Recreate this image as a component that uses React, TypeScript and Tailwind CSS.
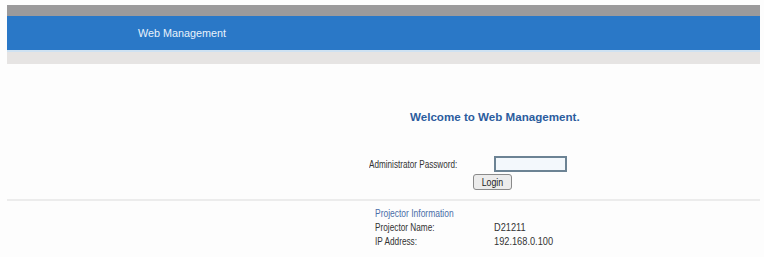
export default function App() {
  return (
    <div className="h-[257px] w-[764px] overflow-hidden bg-[#fdfdfd] pl-[7px] pr-[4px] pt-[5px] font-['Liberation_Sans',Arial,sans-serif]">
      {/* Header bars */}
      <div className="h-[11px] bg-[#9b9a9b]" />
      <div className="flex h-[34px] items-center bg-[#2a78c7] pl-[131px] text-[10.8px] text-[#e8f2fc]">
        Web Management
      </div>
      <div className="h-[2px] bg-[#cfe2f2]" />
      <div className="h-[12px] bg-[#e6e4e3]" />

      {/* Login form */}
      <div className="flex flex-col">
        <div className="pl-[403px] pt-[46px] text-[11.6px] font-bold leading-[14px] text-[#2b5c9e]">
          Welcome to Web Management.
        </div>
        <div className="mt-[32px] flex h-[16px] items-center pl-[362px]">
          <span className="w-[125px]">
            <span className="block origin-left scale-x-[0.74] whitespace-nowrap text-[11px] text-[#333]">
              Administrator Password:
            </span>
          </span>
          <input
            type="password"
            className="h-[16px] w-[73px] border-2 border-[#6c8394] bg-[#f3f8fc] outline-none"
          />
        </div>
        <div className="mt-[2px] flex pl-[466px]">
          <button className="flex h-[16px] w-[39px] items-center justify-center rounded-[3px] border border-[#8a8a8a] bg-[#ececec] text-[11px] leading-[12px] text-[#222]">
            <span className="scale-x-[0.8]">Login</span>
          </button>
        </div>
        <div className="mt-[9px] h-[2px] bg-[#ececec]" />
        <div className="flex flex-col pl-[368px] pt-[5px] text-[11px] leading-[14px] text-[#333]">
          <span className="origin-left scale-x-[0.77] whitespace-nowrap text-[#4a6ea8]">
            Projector Information
          </span>
          <div className="flex">
            <span className="w-[119px] origin-left scale-x-[0.75] whitespace-nowrap">
              Projector Name:
            </span>
            <span className="origin-left scale-x-[0.84]">D21211</span>
          </div>
          <div className="flex">
            <span className="w-[119px] origin-left scale-x-[0.75] whitespace-nowrap">
              IP Address:
            </span>
            <span className="origin-left scale-x-[0.84]">192.168.0.100</span>
          </div>
        </div>
      </div>
    </div>
  );
}
